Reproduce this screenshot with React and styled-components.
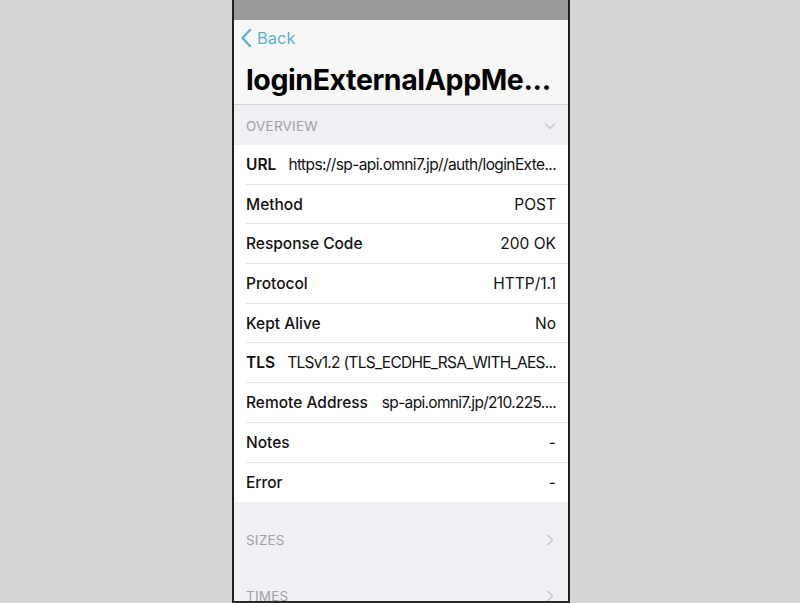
import React from 'react'
import styled, { createGlobalStyle } from 'styled-components'

const GlobalStyle = createGlobalStyle`
  body {
    margin: 0;
    background: #d6d4d4;
    font-family: Inter, "Noto Sans", sans-serif;
  }
`

const Page = styled.div`
  display: flex;
  justify-content: center;
  height: 603px;
  overflow: hidden;
  padding-left: 2px;
  box-sizing: border-box;
`

const Phone = styled.div`
  width: 334px;
  height: 601px;
  border-left: 2px solid #1f1f1f;
  border-right: 2px solid #1f1f1f;
  border-bottom: 2px solid #2a2a2a;
  background: #efeff4;
  display: flex;
  flex-direction: column;
  overflow: hidden;
`

const StatusBar = styled.div`
  height: 20px;
  background: #999999;
  flex-shrink: 0;
`

const NavBar = styled.div`
  background: #f7f7f7;
  height: 84px;
  border-bottom: 1px solid #d4d4d8;
  display: flex;
  flex-direction: column;
  flex-shrink: 0;
`

const BackButton = styled.div`
  display: flex;
  align-items: center;
  gap: 5px;
  padding: 6px 0 0 6px;
  height: 24px;
  color: #5db0d1;
  font-size: 16.5px;
`

const Title = styled.h1`
  margin: 12px 0 0 12px;
  font-size: 28.5px;
  font-weight: 700;
  letter-spacing: -0.4px;
  color: #000;
`

const SectionHeader = styled.div`
  display: flex;
  align-items: center;
  justify-content: space-between;
  height: ${p => p.$height || 40}px;
  padding: 1px 12px 0;
  box-sizing: border-box;
  flex-shrink: 0;
  color: #a1a1a6;
  font-size: 13.5px;
  letter-spacing: 0.2px;
`

const Rows = styled.div`
  background: #fff;
  flex-shrink: 0;
`

const Row = styled.div`
  display: flex;
  align-items: center;
  gap: ${p => p.$gap || 9}px;
  height: 39.7px;
  margin-left: 12px;
  padding-right: 12px;
  border-bottom: ${p => (p.$last ? 'none' : '1px solid #e2e2e6')};
  box-sizing: border-box;
  font-size: 15.5px;
  color: #111;
`

const Label = styled.span`
  flex-shrink: 0;
  font-weight: ${p => (p.$strong ? 600 : 500)};
`

const Value = styled.span`
  flex: 1;
  min-width: 0;
  text-align: right;
  white-space: nowrap;
  letter-spacing: ${p => p.$spacing || 0}px;
`

const Spacer = styled.div`
  height: ${p => p.$height}px;
  flex-shrink: 0;
`

const Chevron = ({ dir }) => (
  <svg width="12" height="12" viewBox="0 0 12 12" fill="none">
    <path
      d={dir === 'down' ? 'M1.5 4 L6 8.5 L10.5 4' : 'M4 1.5 L8.5 6 L4 10.5'}
      stroke="#c7c7cc"
      strokeWidth="1.5"
      strokeLinecap="round"
      strokeLinejoin="round"
    />
  </svg>
)

const rows = [
  { label: 'URL', value: 'https://sp-api.omni7.jp//auth/loginExte...', strong: true, spacing: -0.62, gap: 5 },
  { label: 'Method', value: 'POST' },
  { label: 'Response Code', value: '200 OK' },
  { label: 'Protocol', value: 'HTTP/1.1' },
  { label: 'Kept Alive', value: 'No' },
  { label: 'TLS', value: 'TLSv1.2 (TLS_ECDHE_RSA_WITH_AES...', strong: true, spacing: -0.72, gap: 8 },
  { label: 'Remote Address', value: 'sp-api.omni7.jp/210.225....', gap: 8, spacing: -0.68 },
  { label: 'Notes', value: '-' },
  { label: 'Error', value: '-' },
]

export default function App() {
  return (
    <Page>
      <GlobalStyle />
      <Phone>
        <StatusBar />
        <NavBar>
          <BackButton>
            <svg width="12" height="20" viewBox="0 0 12 20" fill="none">
              <path d="M10 2 L2.5 10 L10 18" stroke="#5db0d1" strokeWidth="2.4" strokeLinecap="round" strokeLinejoin="round" />
            </svg>
            Back
          </BackButton>
          <Title>loginExternalAppMe...</Title>
        </NavBar>
        <SectionHeader>
          OVERVIEW
          <Chevron dir="down" />
        </SectionHeader>
        <Rows>
          {rows.map((r, i) => (
            <Row key={r.label} $gap={r.gap} $last={i === rows.length - 1}>
              <Label $strong={r.strong}>{r.label}</Label>
              <Value $spacing={r.spacing}>{r.value}</Value>
            </Row>
          ))}
        </Rows>
        <Spacer $height={17} />
        <SectionHeader>
          SIZES
          <Chevron dir="right" />
        </SectionHeader>
        <Spacer $height={16} />
        <SectionHeader>
          TIMES
          <Chevron dir="right" />
        </SectionHeader>
      </Phone>
    </Page>
  )
}
